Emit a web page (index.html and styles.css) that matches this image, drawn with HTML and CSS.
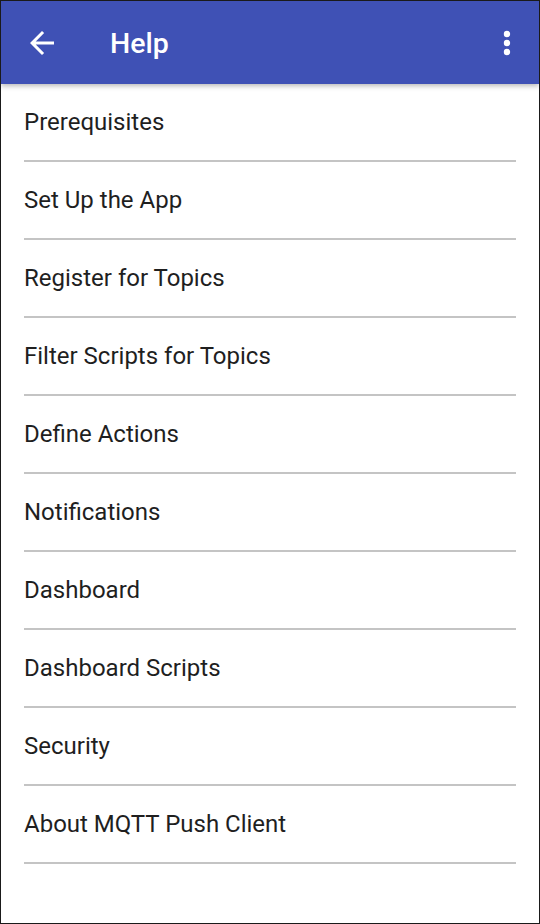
FILE: index.html
```html
<!DOCTYPE html>
<html>
<head>
<meta charset="utf-8">
<link rel="stylesheet" href="styles.css">
</head>
<body>
<div class="screen">
  <header class="appbar">
    <svg class="back" width="36" height="36" viewBox="0 0 24 24"><path fill="#fff" d="M20 11H7.83l5.59-5.59L12 4l-8 8 8 8 1.41-1.41L7.83 13H20v-2z"/></svg>
    <h1 class="title">Help</h1>
    <svg class="more" width="12" height="30" viewBox="0 0 12 30"><circle cx="6" cy="6" r="3.2" fill="#fff"/><circle cx="6" cy="15" r="3.2" fill="#fff"/><circle cx="6" cy="24" r="3.2" fill="#fff"/></svg>
  </header>
  <ul class="list">
    <li class="item">Prerequisites</li>
    <li class="item">Set Up the App</li>
    <li class="item">Register for Topics</li>
    <li class="item">Filter Scripts for Topics</li>
    <li class="item">Define Actions</li>
    <li class="item">Notifications</li>
    <li class="item">Dashboard</li>
    <li class="item">Dashboard Scripts</li>
    <li class="item">Security</li>
    <li class="item">About MQTT Push Client</li>
  </ul>
</div>
</body>
</html>
```
FILE: styles.css
```css
* { box-sizing: border-box; }
html, body { margin: 0; padding: 0; }
body { background: #fff; font-family: Roboto, "Liberation Sans", sans-serif; }
.screen {
  width: 540px;
  height: 924px;
  border: 1px solid #1a1a1a;
  background: #fff;
  overflow: hidden;
  display: flex;
  flex-direction: column;
}
.appbar {
  height: 83px;
  flex: none;
  background: #3f51b5;
  display: flex;
  align-items: center;
  padding: 1px 26px 0 23px;
  box-shadow: 0 2px 5px rgba(0,0,0,0.28);
  position: relative;
  z-index: 1;
}
.back { flex: none; display: block; }
.title {
  margin: 2px 0 0 50px;
  flex: 1;
  color: #fff;
  font-size: 28.5px;
  font-weight: 500;
  line-height: 1;
}
.more { flex: none; display: block; }
.list {
  list-style: none;
  margin: 0;
  padding: 0 23px;
}
.item {
  height: 78px;
  display: flex;
  align-items: center;
  padding-top: 0;
  font-size: 24px;
  color: #1f1f1f;
  border-bottom: 2px solid #c4c4c4;
}
```
